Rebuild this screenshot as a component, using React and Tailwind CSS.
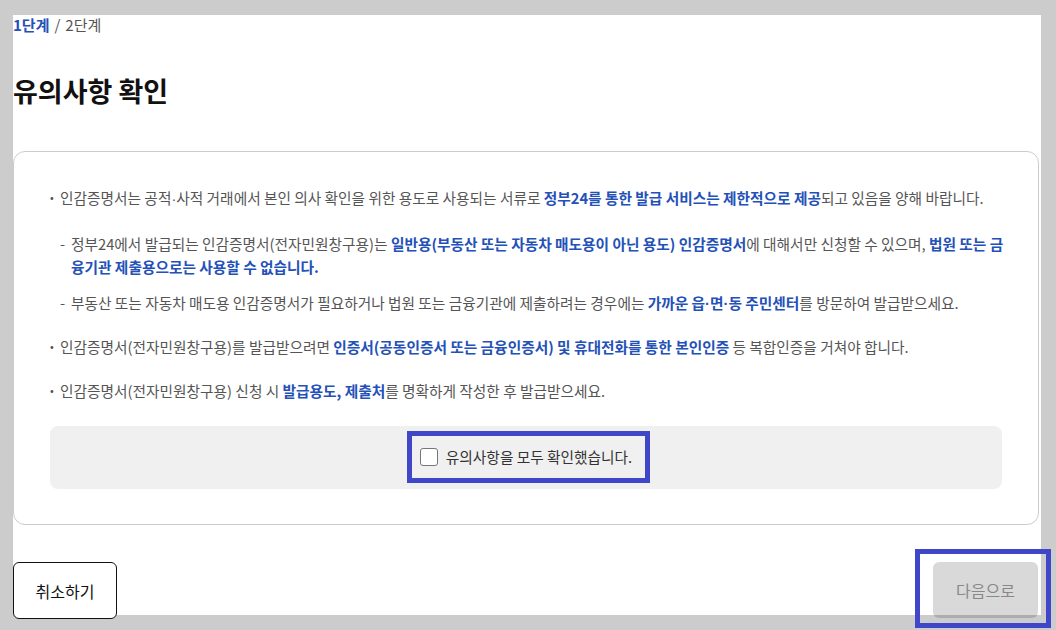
const blue = 'font-bold text-[#2451b8]';

function Dot() {
    return (
        <span className="leading-none" style={{ fontFamily: '"Liberation Sans", sans-serif' }}>
            ·
        </span>
    );
}

function Notice() {
    return (
        <ul className="flex flex-col gap-[21px] text-[14.7px] leading-[23px] text-[#555555]">
            <li className="flex flex-col gap-[23px]">
                <div className="flex">
                    <span className="w-[10px] shrink-0 text-[11px]">•</span>
                    <p>
                        인감증명서는 공적<Dot />사적 거래에서 본인 의사 확인을 위한 용도로 사용되는 서류로{' '}
                        <b className={blue}>정부24를 통한 발급 서비스는 제한적으로 제공</b>되고 있음을 양해 바랍니다.
                    </p>
                </div>
                <div className="flex flex-col gap-[13px] pl-[10px]">
                    <div className="flex">
                        <span className="w-[11px] shrink-0">-</span>
                        <p className="break-all">
                            정부24에서 발급되는 인감증명서(전자민원창구용)는{' '}
                            <b className={blue}>일반용(부동산 또는 자동차 매도용이 아닌 용도) 인감증명서</b>에 대해서만 신청할 수 있으며,{' '}
                            <b className={blue}>법원 또는 금융기관 제출용으로는 사용할 수 없습니다.</b>
                        </p>
                    </div>
                    <div className="flex">
                        <span className="w-[11px] shrink-0">-</span>
                        <p>
                            부동산 또는 자동차 매도용 인감증명서가 필요하거나 법원 또는 금융기관에 제출하려는 경우에는{' '}
                            <b className={blue}>가까운 읍<Dot />면<Dot />동 주민센터</b>를 방문하여 발급받으세요.
                        </p>
                    </div>
                </div>
            </li>
            <li className="flex">
                <span className="w-[10px] shrink-0 text-[11px]">•</span>
                <p>
                    인감증명서(전자민원창구용)를 발급받으려면{' '}
                    <b className={blue}>인증서(공동인증서 또는 금융인증서) 및 휴대전화를 통한 본인인증</b> 등 복합인증을 거쳐야 합니다.
                </p>
            </li>
            <li className="flex">
                <span className="w-[10px] shrink-0 text-[11px]">•</span>
                <p>
                    인감증명서(전자민원창구용) 신청 시 <b className={blue}>발급용도, 제출처</b>를 명확하게 작성한 후 발급받으세요.
                </p>
            </li>
        </ul>
    );
}

export default function App() {
    return (
        <div
            className="relative w-[1056px] h-[630px] overflow-hidden bg-[#cccccc] pl-[13px] pt-[15px]"
            style={{ fontFamily: '"Noto Sans CJK KR", "Noto Sans", sans-serif' }}
        >
            <div className="w-[1028px] h-[600px] bg-white flex flex-col">
                <div className="text-[15px] leading-[20px] text-[#555555]">
                    <span className="font-bold text-[#2451b8]">1단계</span>
                    <span className="mx-[5px]">/</span>2단계
                </div>
                <h1 className="mt-[38px] text-[27px] leading-[36px] font-bold text-[#111111]">유의사항 확인</h1>

                <div className="mt-[42px] w-[1026px] rounded-[12px] border border-[#cccccc] pt-[34px] pb-[35px] pl-[36px] pr-[36px]">
                    <div className="mr-[-4px]">
                        <Notice />
                    </div>
                    <div className="mt-[24px] h-[63px] rounded-[8px] bg-[#f0f0f0] flex items-center justify-center">
                        <label className="flex items-center gap-[8px] text-[14.7px] text-[#333333]">
                            <span className="w-[18px] h-[18px] rounded-[3px] border border-[#767676] bg-white" />
                            유의사항을 모두 확인했습니다.
                        </label>
                    </div>
                </div>

                <div className="mt-[37px] flex justify-between pr-[3px]">
                    <button className="w-[104px] h-[57px] rounded-[6px] border border-[#111111] bg-white text-[16px] text-[#111111]">
                        취소하기
                    </button>
                    <button className="w-[105px] h-[56px] rounded-[6px] bg-black/15 text-[16px] text-[#888888]">
                        다음으로
                    </button>
                </div>
            </div>

            <div className="absolute left-[407px] top-[431px] w-[243px] h-[52px] border-[5px] border-[#3f46c8]" />
            <div className="absolute left-[915px] top-[549px] w-[136px] h-[79px] border-[5px] border-[#3f46c8]" />
        </div>
    );
}
